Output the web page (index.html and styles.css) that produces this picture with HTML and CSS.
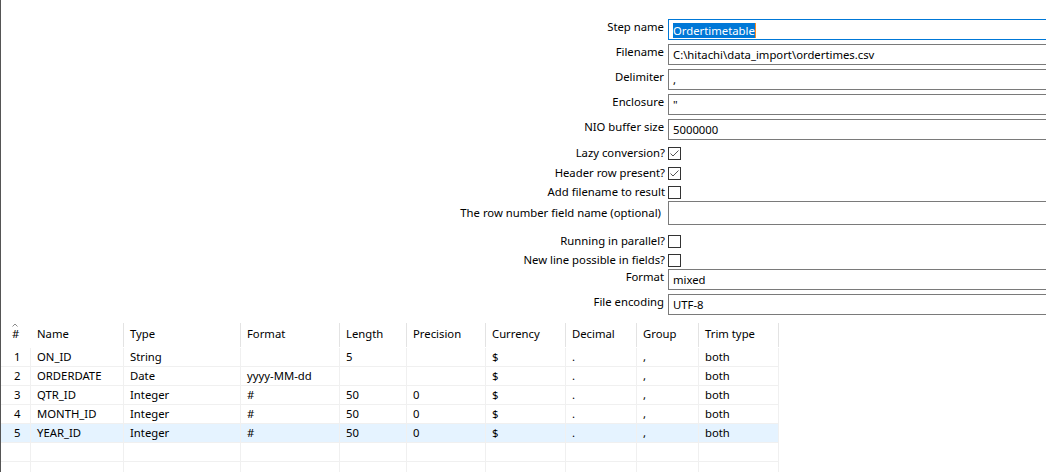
FILE: index.html
```html
<!DOCTYPE html>
<html>
<head>
<meta charset="utf-8">
<link rel="stylesheet" href="styles.css">
</head>
<body>
<div class="frame">
  <div class="form">
    <div class="row"><div class="label">Step name</div><div class="field focus"><span class="sel">Ordertimetable</span><span class="caret"></span></div></div>
    <div class="row"><div class="label">Filename</div><div class="field">C:\hitachi\data_import\ordertimes.csv</div></div>
    <div class="row"><div class="label">Delimiter</div><div class="field">,</div></div>
    <div class="row"><div class="label">Enclosure</div><div class="field">"</div></div>
    <div class="row"><div class="label">NIO buffer size</div><div class="field">5000000</div></div>
    <div class="row check mt3"><div class="label">Lazy conversion?</div><svg class="box" width="13" height="13" viewBox="0 0 13 13"><rect x="0.5" y="0.5" width="12" height="12" fill="#fff" stroke="#333"/><polyline points="2.5,6.5 5,9 10.5,3.5" fill="none" stroke="#555" stroke-width="1"/></svg></div>
    <div class="row check mt7"><div class="label">Header row present?</div><svg class="box" width="13" height="13" viewBox="0 0 13 13"><rect x="0.5" y="0.5" width="12" height="12" fill="#fff" stroke="#333"/><polyline points="2.5,6.5 5,9 10.5,3.5" fill="none" stroke="#555" stroke-width="1"/></svg></div>
    <div class="row check mt6"><div class="label">Add filename to result</div><svg class="box" width="13" height="13" viewBox="0 0 13 13"><rect x="0.5" y="0.5" width="12" height="12" fill="#fff" stroke="#333"/></svg></div>
    <div class="row tallrow mt2"><div class="label">The row number field name (optional)</div><div class="field tall"></div></div>
    <div class="row check mt10"><div class="label">Running in parallel?</div><svg class="box" width="13" height="13" viewBox="0 0 13 13"><rect x="0.5" y="0.5" width="12" height="12" fill="#fff" stroke="#333"/></svg></div>
    <div class="row check mt6"><div class="label">New line possible in fields?</div><svg class="box" width="13" height="13" viewBox="0 0 13 13"><rect x="0.5" y="0.5" width="12" height="12" fill="#fff" stroke="#333"/></svg></div>
    <div class="row mt2"><div class="label">Format</div><div class="field">mixed</div></div>
    <div class="row last"><div class="label">File encoding</div><div class="field">UTF-8</div></div>
  </div>

  <div class="grid">
    <div class="thead">
      <div class="th num"><svg class="sort" width="6" height="4" viewBox="0 0 6 4"><polyline points="0.5,3.5 3,1 5.5,3.5" fill="none" stroke="#8a8a8a" stroke-width="1"/></svg><span class="hash">#</span></div>
      <div class="th">Name</div>
      <div class="th">Type</div>
      <div class="th">Format</div>
      <div class="th">Length</div>
      <div class="th">Precision</div>
      <div class="th">Currency</div>
      <div class="th">Decimal</div>
      <div class="th">Group</div>
      <div class="th">Trim type</div>
    </div>
    <div class="tr">
      <div class="td num">1</div><div class="td">ON_ID</div><div class="td">String</div><div class="td"></div><div class="td">5</div><div class="td"></div><div class="td">$</div><div class="td">.</div><div class="td">,</div><div class="td">both</div>
    </div>
    <div class="tr">
      <div class="td num">2</div><div class="td">ORDERDATE</div><div class="td">Date</div><div class="td">yyyy-MM-dd</div><div class="td"></div><div class="td"></div><div class="td">$</div><div class="td">.</div><div class="td">,</div><div class="td">both</div>
    </div>
    <div class="tr">
      <div class="td num">3</div><div class="td">QTR_ID</div><div class="td">Integer</div><div class="td">#</div><div class="td">50</div><div class="td">0</div><div class="td">$</div><div class="td">.</div><div class="td">,</div><div class="td">both</div>
    </div>
    <div class="tr">
      <div class="td num">4</div><div class="td">MONTH_ID</div><div class="td">Integer</div><div class="td">#</div><div class="td">50</div><div class="td">0</div><div class="td">$</div><div class="td">.</div><div class="td">,</div><div class="td">both</div>
    </div>
    <div class="tr selected">
      <div class="td num">5</div><div class="td">YEAR_ID</div><div class="td">Integer</div><div class="td">#</div><div class="td">50</div><div class="td">0</div><div class="td">$</div><div class="td">.</div><div class="td">,</div><div class="td">both</div>
    </div>
    <div class="tr">
      <div class="td num"></div><div class="td"></div><div class="td"></div><div class="td"></div><div class="td"></div><div class="td"></div><div class="td"></div><div class="td"></div><div class="td"></div><div class="td"></div>
    </div>
    <div class="tr">
      <div class="td num"></div><div class="td"></div><div class="td"></div><div class="td"></div><div class="td"></div><div class="td"></div><div class="td"></div><div class="td"></div><div class="td"></div><div class="td"></div>
    </div>
  </div>
</div>
</body>
</html>
```

FILE: styles.css
```css
html, body {
  margin: 0;
  padding: 0;
}
body {
  width: 1046px;
  height: 472px;
  overflow: hidden;
  background: #fff;
  font-family: "Noto Sans", "Segoe UI", sans-serif;
  font-size: 11.3px;
  color: #000;
}
.frame {
  height: 472px;
  border-left: 1px solid #555;
  box-sizing: border-box;
  overflow: hidden;
}
.form {
  display: flex;
  flex-direction: column;
  padding-top: 19px;
}
.row {
  display: flex;
  align-items: flex-start;
  height: 25px;
  flex: none;
}
.row.last { height: 21px; }
.row.check {
  height: 13px;
  align-items: center;
}
.row.tallrow { height: 24px; }
.mt2 { margin-top: 2px; }
.mt3 { margin-top: 3px; }
.mt6 { margin-top: 6px; }
.mt7 { margin-top: 7px; }
.mt10 { margin-top: 10px; }
.label {
  width: 667px;
  flex: none;
  box-sizing: border-box;
  padding-right: 4px;
  text-align: right;
  line-height: 15px;
  white-space: nowrap;
}
.check .label {
  padding-right: 3px;
  line-height: 13px;
  padding-bottom: 2px;
}
.tallrow .label { line-height: 24px; padding-right: 7px; }
.field {
  width: 420px;
  height: 21px;
  flex: none;
  box-sizing: border-box;
  border: 1px solid #7a7a7a;
  padding-left: 4px;
  line-height: 19px;
  white-space: nowrap;
  overflow: hidden;
}
.field.focus { border-color: #0078d7; }
.field.tall { height: 24px; }
.sel {
  display: inline-block;
  vertical-align: middle;
  background: #0078d7;
  color: #fff;
  line-height: 15px;
}
.caret {
  display: inline-block;
  vertical-align: middle;
  width: 1px;
  height: 15px;
  background: #ff8a1c;
}
.box { display: block; flex: none; }

.grid {
  margin-top: 8px;
  width: 778px;
}
.thead, .tr {
  display: grid;
  grid-template-columns: 30px 93px 117px 99px 67px 79px 80px 71px 62px 80px;
}
.thead { height: 25px; }
.th {
  height: 24px;
  box-sizing: border-box;
  border-right: 1px solid #e3e3e3;
  padding: 3px 0 0 6px;
  line-height: 16px;
  white-space: nowrap;
}
.th.num {
  border-right: none;
  padding: 0 0 0 11px;
  display: flex;
  flex-direction: column;
}
.sort { display: block; }
.hash { line-height: 14px; }
.tr { height: 19px; }
.td {
  box-sizing: border-box;
  border-right: 1px solid #f0f0f0;
  border-bottom: 1px solid #f0f0f0;
  padding-left: 6px;
  line-height: 18px;
  white-space: nowrap;
  overflow: hidden;
}
.td.num { padding-left: 13px; }
.tr.selected .td { background: #e5f3ff; }
```
